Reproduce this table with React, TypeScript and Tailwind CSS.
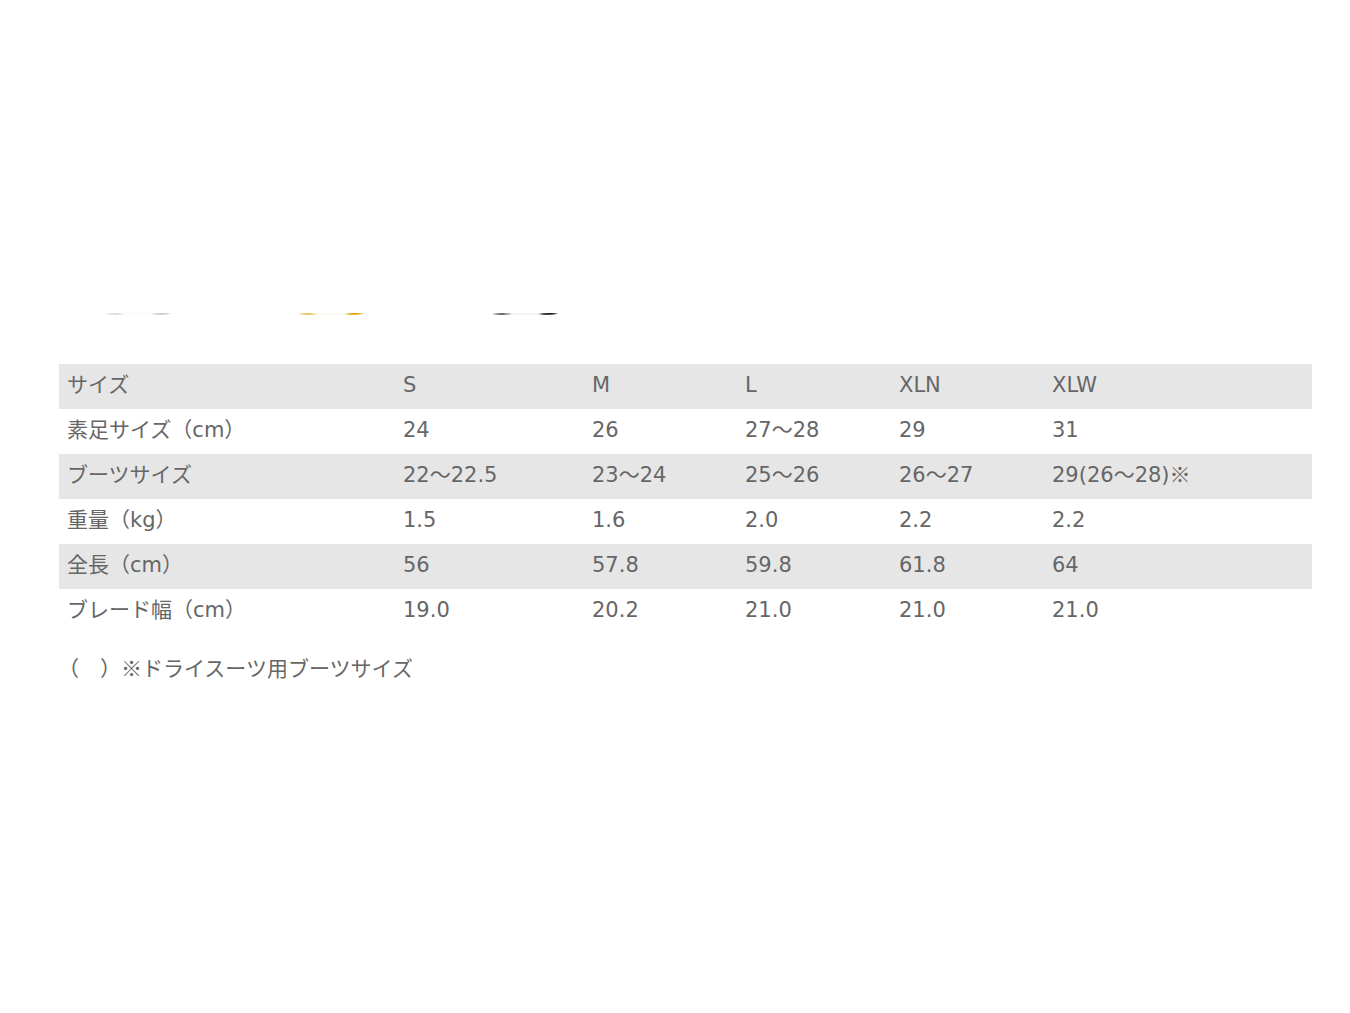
import React from "react";

const rows = [
    ["サイズ", "S", "M", "L", "XLN", "XLW"],
    ["素足サイズ（cm）", "24", "26", "27～28", "29", "31"],
    ["ブーツサイズ", "22～22.5", "23～24", "25～26", "26～27", "29(26～28)※"],
    ["重量（kg）", "1.5", "1.6", "2.0", "2.2", "2.2"],
    ["全長（cm）", "56", "57.8", "59.8", "61.8", "64"],
    ["ブレード幅（cm）", "19.0", "20.2", "21.0", "21.0", "21.0"],
];

const thumbs = [
    { color: "#c8c8c8", left: "ml-[105px]" },
    { color: "#e0a100", left: "ml-[127px]" },
    { color: "#111111", left: "ml-[128px]" },
];

const ThumbEdge: React.FC<{ color: string }> = ({ color }) => (
    <svg width="66" height="6" viewBox="0 0 66 6">
        <path d="M0 3 Q10 1.5 20 3 Q10 4.5 0 3Z" fill={color} opacity="0.85" />
        <path d="M46 3 Q56 1.2 66 2.4 Q60 5 46 3Z" fill={color} />
        <path d="M20 3 L46 3" stroke={color} strokeWidth="0.6" opacity="0.15" />
    </svg>
);

// ※ comes from the CJK font so it has full width, as in the picture
const withMark = (text: string) =>
    text.endsWith("※") ? (
        <>
            {text.slice(0, -1)}
            <span className="leading-none" style={{ fontFamily: '"Noto Sans CJK JP", sans-serif' }}>
                ※
            </span>
        </>
    ) : (
        text
    );

export default function App() {
    return (
        <div
            className="w-[1350px] h-[1013px] bg-white text-[#666666]"
            style={{ fontFamily: '"DejaVu Sans", "Noto Sans CJK JP", sans-serif' }}
        >
            <div className="flex pt-[311px] h-[364px]">
                {thumbs.map((t) => (
                    <div key={t.color} className={t.left}>
                        <ThumbEdge color={t.color} />
                    </div>
                ))}
            </div>

            <table className="ml-[59px] w-[1253px] table-fixed border-collapse text-[21px]">
                <colgroup>
                    <col className="w-[336px]" />
                    <col className="w-[189px]" />
                    <col className="w-[153px]" />
                    <col className="w-[154px]" />
                    <col className="w-[153px]" />
                    <col className="w-[268px]" />
                </colgroup>
                <tbody>
                    {rows.map((row, i) => (
                        <tr
                            key={row[0]}
                            className={`h-[45px] ${i % 2 === 0 ? "bg-[#e6e6e6]" : "bg-white"}`}
                        >
                            {row.map((cell, j) => (
                                <td
                                    key={j}
                                    className="h-[45px] px-2 pt-0 pb-[3px] leading-[38px] align-middle whitespace-nowrap"
                                >
                                    {withMark(cell)}
                                </td>
                            ))}
                        </tr>
                    ))}
                </tbody>
            </table>

            <p
                className="ml-[58px] mt-[18px] text-[21px]"
                style={{ fontFamily: '"Noto Sans CJK JP", sans-serif' }}
            >
                （　）※ドライスーツ用ブーツサイズ
            </p>
        </div>
    );
}
